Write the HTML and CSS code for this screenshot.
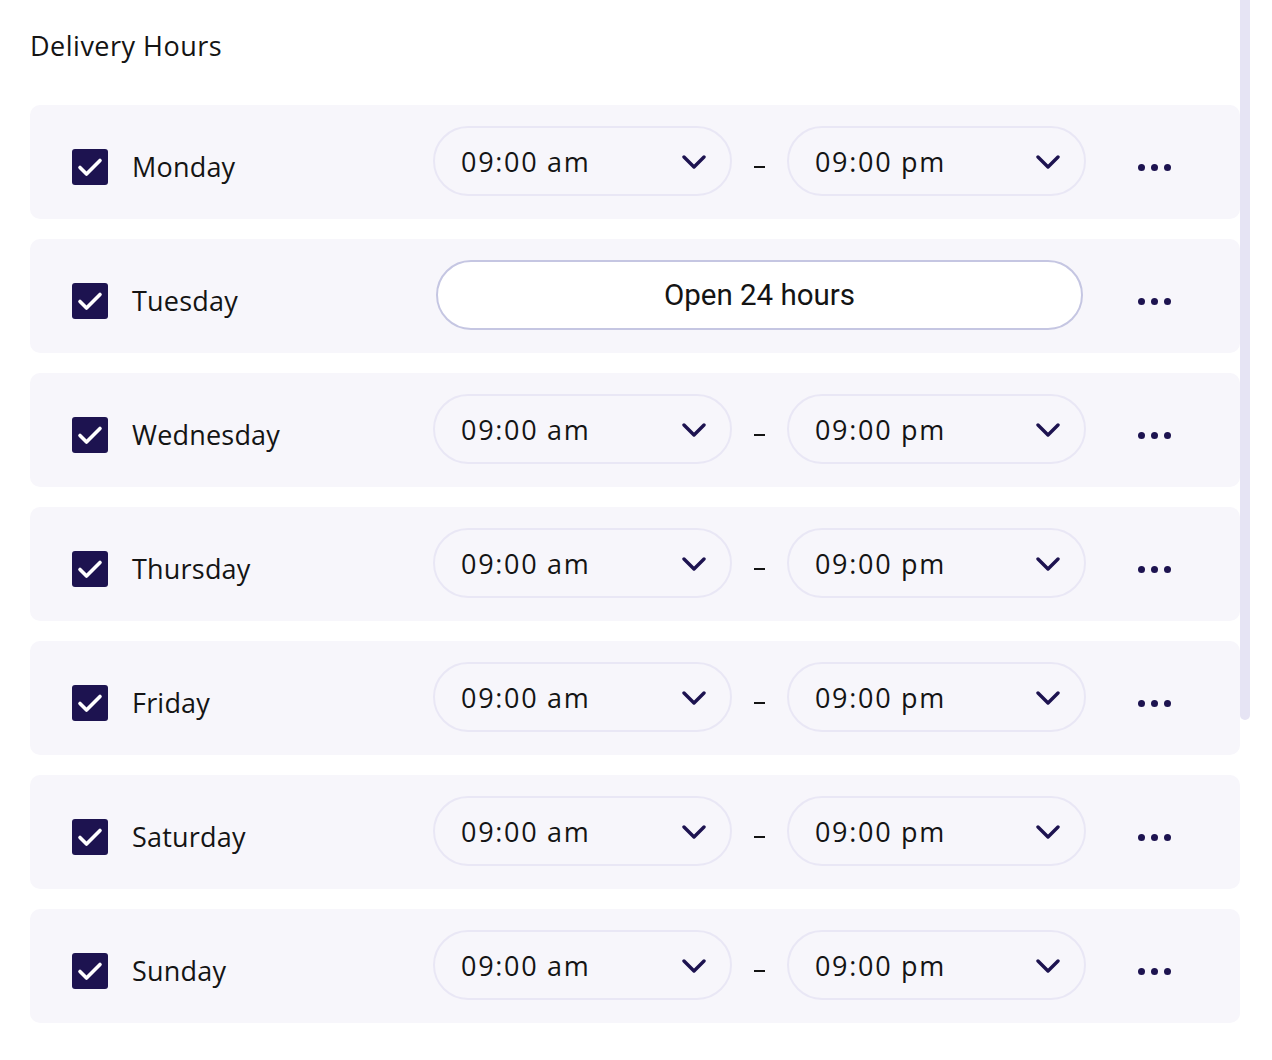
FILE: index.html
```html
<!DOCTYPE html>
<html lang="en">
<head>
    <meta charset="UTF-8">
    <meta name="viewport" content="width=device-width, initial-scale=1.0">
    <title>Delivery Hours</title>
    <link rel="stylesheet" href="styles.css">
</head>
<body>
    <div class="page">
        <h2 class="section-title">Delivery Hours</h2>

        <div class="days">
            <div class="day-row">
                <span class="check"><svg viewBox="0 0 36 36"><path d="M8 18.5l6.5 6.5L28 11.5"/></svg></span>
                <span class="day-name">Monday</span>
                <div class="range">
                    <div class="time-select"><span>09:00 am</span><svg class="chev" viewBox="0 0 24 14"><path d="M2 2l10 10L22 2"/></svg></div>
                    <span class="dash"></span>
                    <div class="time-select"><span>09:00 pm</span><svg class="chev" viewBox="0 0 24 14"><path d="M2 2l10 10L22 2"/></svg></div>
                </div>
                <span class="more"><i></i><i></i><i></i></span>
            </div>

            <div class="day-row">
                <span class="check"><svg viewBox="0 0 36 36"><path d="M8 18.5l6.5 6.5L28 11.5"/></svg></span>
                <span class="day-name">Tuesday</span>
                <div class="range">
                    <div class="open-all">Open 24 hours</div>
                </div>
                <span class="more"><i></i><i></i><i></i></span>
            </div>

            <div class="day-row">
                <span class="check"><svg viewBox="0 0 36 36"><path d="M8 18.5l6.5 6.5L28 11.5"/></svg></span>
                <span class="day-name">Wednesday</span>
                <div class="range">
                    <div class="time-select"><span>09:00 am</span><svg class="chev" viewBox="0 0 24 14"><path d="M2 2l10 10L22 2"/></svg></div>
                    <span class="dash"></span>
                    <div class="time-select"><span>09:00 pm</span><svg class="chev" viewBox="0 0 24 14"><path d="M2 2l10 10L22 2"/></svg></div>
                </div>
                <span class="more"><i></i><i></i><i></i></span>
            </div>

            <div class="day-row">
                <span class="check"><svg viewBox="0 0 36 36"><path d="M8 18.5l6.5 6.5L28 11.5"/></svg></span>
                <span class="day-name">Thursday</span>
                <div class="range">
                    <div class="time-select"><span>09:00 am</span><svg class="chev" viewBox="0 0 24 14"><path d="M2 2l10 10L22 2"/></svg></div>
                    <span class="dash"></span>
                    <div class="time-select"><span>09:00 pm</span><svg class="chev" viewBox="0 0 24 14"><path d="M2 2l10 10L22 2"/></svg></div>
                </div>
                <span class="more"><i></i><i></i><i></i></span>
            </div>

            <div class="day-row">
                <span class="check"><svg viewBox="0 0 36 36"><path d="M8 18.5l6.5 6.5L28 11.5"/></svg></span>
                <span class="day-name">Friday</span>
                <div class="range">
                    <div class="time-select"><span>09:00 am</span><svg class="chev" viewBox="0 0 24 14"><path d="M2 2l10 10L22 2"/></svg></div>
                    <span class="dash"></span>
                    <div class="time-select"><span>09:00 pm</span><svg class="chev" viewBox="0 0 24 14"><path d="M2 2l10 10L22 2"/></svg></div>
                </div>
                <span class="more"><i></i><i></i><i></i></span>
            </div>

            <div class="day-row">
                <span class="check"><svg viewBox="0 0 36 36"><path d="M8 18.5l6.5 6.5L28 11.5"/></svg></span>
                <span class="day-name">Saturday</span>
                <div class="range">
                    <div class="time-select"><span>09:00 am</span><svg class="chev" viewBox="0 0 24 14"><path d="M2 2l10 10L22 2"/></svg></div>
                    <span class="dash"></span>
                    <div class="time-select"><span>09:00 pm</span><svg class="chev" viewBox="0 0 24 14"><path d="M2 2l10 10L22 2"/></svg></div>
                </div>
                <span class="more"><i></i><i></i><i></i></span>
            </div>

            <div class="day-row">
                <span class="check"><svg viewBox="0 0 36 36"><path d="M8 18.5l6.5 6.5L28 11.5"/></svg></span>
                <span class="day-name">Sunday</span>
                <div class="range">
                    <div class="time-select"><span>09:00 am</span><svg class="chev" viewBox="0 0 24 14"><path d="M2 2l10 10L22 2"/></svg></div>
                    <span class="dash"></span>
                    <div class="time-select"><span>09:00 pm</span><svg class="chev" viewBox="0 0 24 14"><path d="M2 2l10 10L22 2"/></svg></div>
                </div>
                <span class="more"><i></i><i></i><i></i></span>
            </div>
        </div>
    </div>

    <div class="scroll-thumb"></div>
</body>
</html>
```

FILE: styles.css
```css
* {
    margin: 0;
    padding: 0;
    box-sizing: border-box;
}

body {
    font-family: 'Open Sans', 'Liberation Sans', sans-serif;
    background: #ffffff;
    color: #141414;
    height: 100vh;
    overflow: hidden;
}

.page {
    width: 1240px;
    padding: 26px 0 0 30px;
}

.section-title {
    font-size: 27px;
    font-weight: 400;
    line-height: 40px;
    letter-spacing: 0.5px;
    margin-bottom: 39px;
}

.days {
    display: flex;
    flex-direction: column;
    gap: 20px;
}

.day-row {
    display: flex;
    align-items: center;
    height: 114px;
    padding-left: 42px;
    background: #f7f6fb;
    border-radius: 10px;
}

.check {
    width: 36px;
    height: 36px;
    border-radius: 3px;
    background: #1d1350;
    display: flex;
    margin-top: 10px;
}

.check svg {
    width: 36px;
    height: 36px;
    fill: none;
    stroke: #ffffff;
    stroke-width: 3.6;
    stroke-linecap: round;
    stroke-linejoin: round;
}

.day-name {
    width: 325px;
    padding-left: 24px;
    font-size: 27px;
    line-height: 36px;
    letter-spacing: 0.2px;
    margin-top: 10px;
}

.range {
    display: flex;
    align-items: center;
    width: 653px;
    margin-bottom: 2px;
}

.time-select {
    width: 300px;
    height: 70px;
    border: 2px solid #e9e7f5;
    border-radius: 35px;
    display: flex;
    align-items: center;
    justify-content: space-between;
    padding: 0 24px 0 26px;
    font-size: 27px;
    letter-spacing: 1.7px;
}

.chev {
    width: 24px;
    height: 14px;
    margin-top: 2px;
    fill: none;
    stroke: #1d1350;
    stroke-width: 3.4;
    stroke-linecap: round;
    stroke-linejoin: round;
}

.dash {
    width: 11px;
    height: 2px;
    background: #141414;
    margin: 12px 22px 0;
}

.open-all {
    width: 647px;
    height: 70px;
    margin-left: 3px;
    border: 2px solid #c5c6e2;
    border-radius: 35px;
    background: #ffffff;
    display: flex;
    align-items: center;
    justify-content: center;
    font-family: Roboto, 'Liberation Sans', sans-serif;
    font-size: 29.5px;
}

.more {
    display: flex;
    gap: 6px;
    margin-left: 52px;
    margin-top: 10px;
}

.more i {
    width: 7px;
    height: 7px;
    border-radius: 50%;
    background: #1d1350;
}

.scroll-thumb {
    position: absolute;
    top: 0;
    left: 1240px;
    width: 10px;
    height: 720px;
    background: #e6e4f4;
    border-radius: 0 0 5px 5px;
}
```
